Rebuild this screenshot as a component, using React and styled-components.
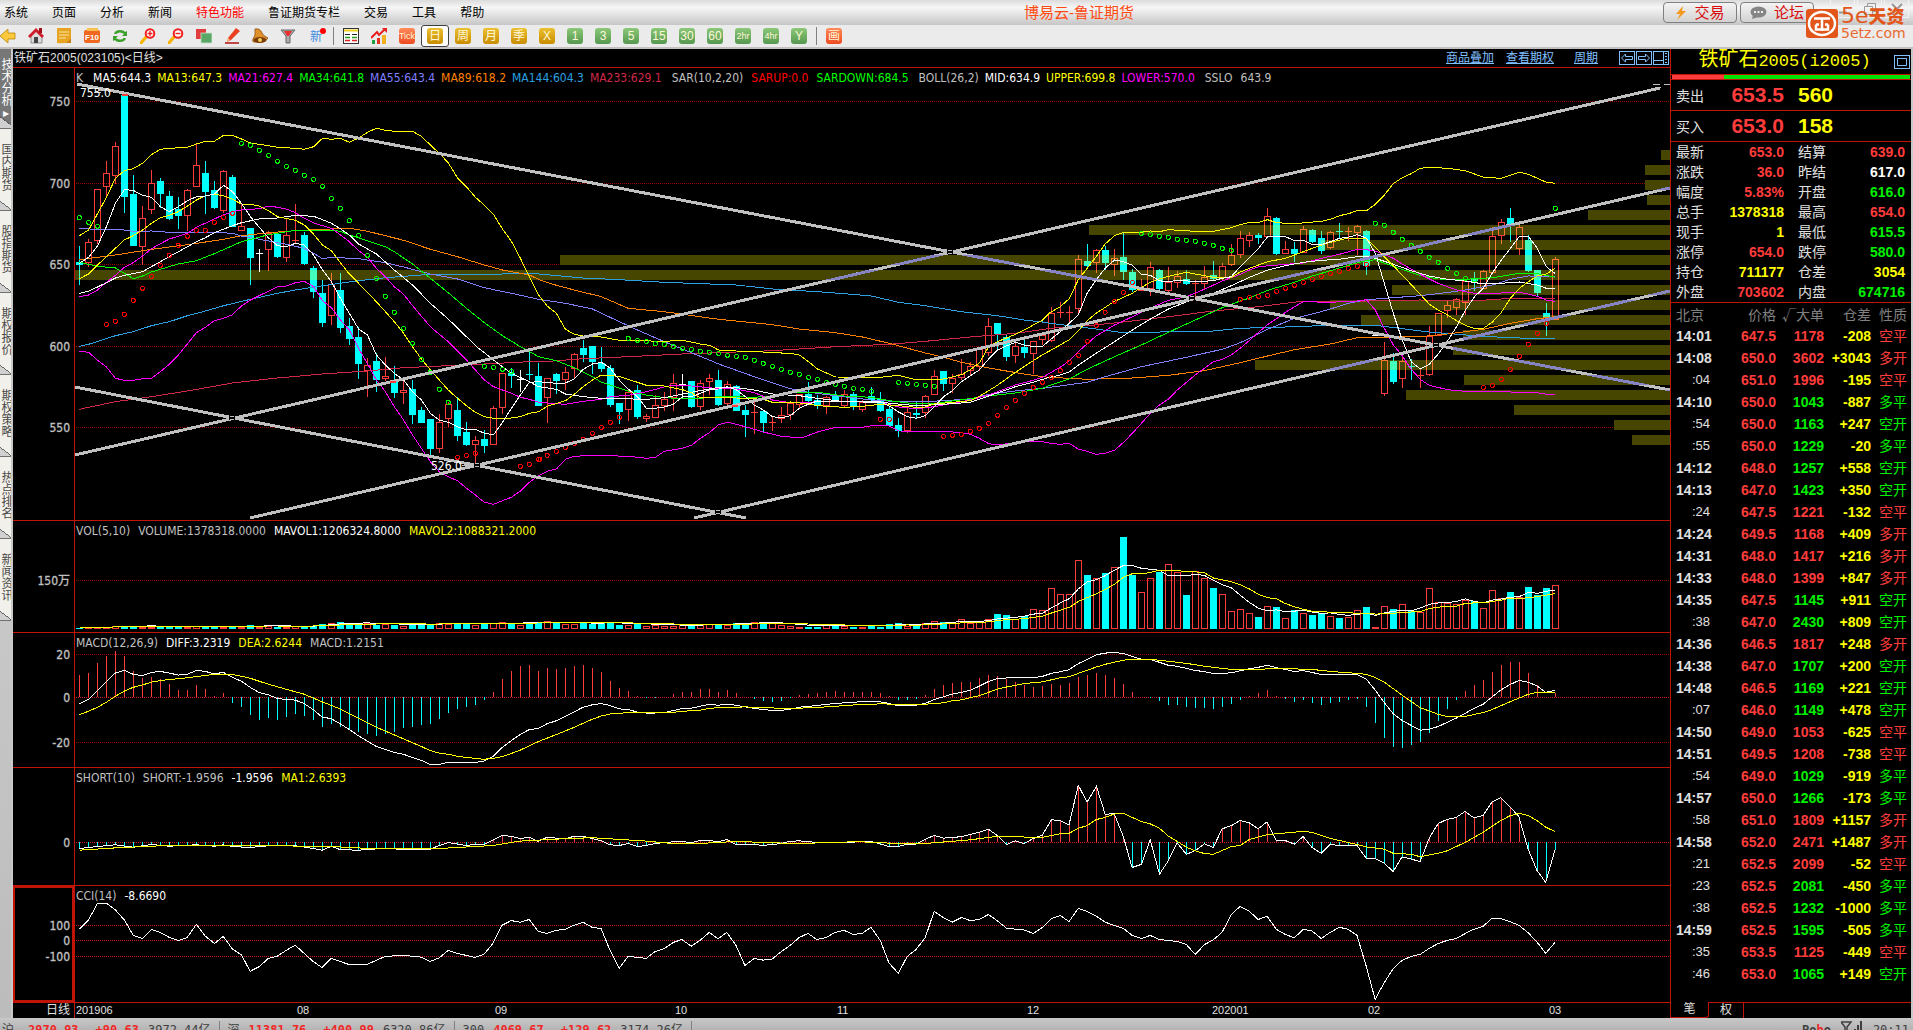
import React from "react";
import styled, { createGlobalStyle, css } from "styled-components";

const SANS = '"Liberation Sans", "Noto Sans CJK SC", sans-serif';
const TAHOMA = '"DejaVu Sans Condensed", "DejaVu Sans", "Noto Sans CJK SC", sans-serif';
const MONO = '"DejaVu Sans Mono", "Noto Sans CJK SC", monospace';

const C = {
  line: "#c01408",
  grid: "#960000",
  red: "#ff3c3c",
  cyan: "#00ffff",
  green: "#00f000",
  yellow: "#ffff00",
  white: "#ffffff",
  label: "#e0e0e0",
  grey: "#c0c0c0",
  magenta: "#ff00ff",
  olive: "#474600",
};

const Global = createGlobalStyle`
  * { box-sizing: border-box; }
  body { margin: 0; background: #000; font-family: ${SANS}; font-size: 12px; }
  button { font-family: inherit; padding: 0; border: 0; background: none; cursor: default; }
  a { text-decoration: none; color: inherit; }
  table { border-collapse: collapse; border-spacing: 0; }
  td, th { padding: 0; }
`;

/* ---------- chart data ---------- */

const PLOT_LEFT = 75;
const PLOT_WIDTH = 1595;
const PLOT_RIGHT = PLOT_LEFT + PLOT_WIDTH;
const barX = (i) => 79.5 + 9 * i;

const frame = (ox, oy, sx, sy) => (text) =>
  text.trim().split(/\s+/).map((p) => {
    const [x, y] = p.split(",").map(Number);
    return [ox + x / sx, oy + y / sy];
  });
const fa = frame(0, 40, 2.8, 3);
const fb = frame(540, 200, 2.8, 3);
const fc = frame(1050, 80, 2.45, 3);
const fl = frame(0, 500, 1.823, 2.958);
const fr = frame(860, 500, 1.823, 2.958);

const join = (...parts) => {
  const out = [];
  parts.forEach((part) => {
    part.forEach((p) => {
      if (!out.length || p[0] > out[out.length - 1][0] + 3) out.push(p);
    });
  });
  return out;
};

const candleSet = (base, text) =>
  text.trim().split(/\s+/).map((row) => {
    const kind = row[0];
    const [h, t, b, l] = row.slice(1).split(",").map((v) => Math.round(base + Number(v) / 3));
    return { kind, h, t, b, l };
  });

const candles = [
  ...candleSet(40, `
  D618,666,675,735 U597,607,668,680 U448,448,602,612 U363,400,442,474 U307,319,407,432
  D158,166,470,518 D405,462,617,617 U498,534,622,675 U390,430,509,521 D414,423,461,503
  D453,468,536,540 D472,507,527,567 U447,451,527,573 U309,376,440,440 D363,399,455,522
  D423,450,503,507 U390,394,512,520 D405,411,560,560 U492,559,574,574 D564,564,654,735
  W628,640,641,695 U573,578,629,692 D581,581,650,654 U537,586,655,665 U492,600,602,610
  D575,585,671,675 D679,684,755,773 D720,759,849,861 U699,732,827,855 D699,750,863,879
  D834,858,897,915 D861,891,971,1017 U954,976,992,1071 D940,963,1020,1055 U951,1009,1017,1024
  D978,1024,1059,1074 U1011,1050,1058,1091 D1020,1047,1124,1152 D1101,1110,1148,1148 D1137,1137,1226,1252
  U1122,1147,1226,1238 U1087,1092,1136,1162 D1071,1110,1187,1202 D1147,1175,1214,1218 U1189,1201,1214,1280
  D1171,1197,1217,1238 U1099,1105,1214,1214 U998,1000,1103,1121 D985,1000,1007,1043 W990,1016,1017,1055
  D936,1002,1003,1020 D969,1008,1097,1097 U1015,1015,1073,1149`),
  ...candleSet(200, `
  D518,522,543,581 U501,516,540,570 U458,462,506,534 D419,444,464,486 D438,438,486,522
  D441,489,507,515 D495,504,615,621 D609,609,636,672 U567,577,629,662 D555,570,651,657
  U641,649,657,666 U585,615,653,653 U576,597,619,633 U522,549,594,633 W522,553,554,594
  D543,543,621,624 U540,549,620,630 U522,534,545,584 D510,540,615,618 U543,552,613,618
  D555,558,633,633 D615,630,645,711 U597,636,638,702 D630,632,669,696 U650,665,667,692
  U621,645,658,669 U609,610,646,660 U582,582,616,628 D546,582,603,612 D585,600,618,627
  U587,592,618,642 D573,588,603,606 U570,582,618,624 D576,582,621,630 U600,605,629,636
  D561,588,600,604 D576,597,633,636 D621,627,678,681 D654,675,693,711 U618,637,692,699
  D606,639,645,657 U586,588,638,655 U510,529,584,584 D513,513,552,573 U522,535,551,579
  U477,522,535,540 U486,498,514,528 U441,446,500,513 U354,379,458,468 D369,369,402,447
  D405,411,471,483 U429,439,469,489 D417,441,459,474 U423,424,461,522 U396,406,421,435
  U321,339,422,426 U306,337,339,354 U318,337,339,366 U165,178,328,342 D132,183,198,204
  U147,151,190,219`),
  ...candleSet(80, `
  D499,510,549,570 U506,535,554,588 D459,532,576,600 D567,576,630,636 U598,625,632,634
  U546,562,628,648 D568,570,627,632 U561,606,633,636 U573,589,609,624 D570,597,612,614
  U600,609,612,657 U558,590,611,627 D543,585,597,600 U549,559,594,599 U492,526,554,558
  U453,475,524,534 U456,466,482,501 D459,465,474,492 U384,409,470,474 D411,414,522,525
  U483,507,521,523 D486,507,522,546 U438,448,518,520 D447,450,486,489 D453,474,513,522
  U453,457,504,507 D429,454,456,474 U441,452,454,483 U435,438,458,526 D450,453,557,585
  W766,766,767,767 U786,841,941,948 D819,843,906,911 U829,843,898,924 D837,857,861,900
  U868,886,889,924 U738,769,884,888 U699,700,767,768 U660,676,694,714 U655,658,685,705
  U603,604,668,705 D576,596,604,633 U570,574,626,628 U441,469,578,580 U417,427,469,492
  D384,414,432,486 U432,441,506,525 D465,480,573,576 D570,570,639,652 D669,699,713,768
  U531,538,719,721`),
];

const overlays = [
  { color: "#d02848", pts: join(
    fa("222,1108 323,1085 424,1070 525,1053 651,1029 777,1014 903,1002 1029,993 1130,983 1255,977 1356,972 1482,965"),
    fb("0,486 121,476 247,470 399,462 525,457 651,452 827,440 978,433 1079,424 1205,411 1331,400 1432,385"),
    fc("0,748 91,737 180,726 290,710 400,693 511,680 577,670 621,663 775,663 907,660 1018,664 1106,657 1238,655")) },
  { color: "#2ba0e0", pts: join(
    fa("222,919 248,913 323,887 373,875 424,857 474,845 525,827 575,813 626,797 701,778 777,760 827,750 903,737 953,730 1004,722 1079,713 1155,707 1205,703 1382,704 1432,700 1508,702"),
    fb("0,226 121,234 222,239 348,247 550,255 651,267 777,275 852,281 928,288 1004,307 1079,317 1180,335 1281,347 1356,360 1407,366"),
    fc("0,730 69,740 180,758 400,753 466,745 577,741 687,736 797,736 863,746 929,756 1018,765 1106,772 1172,775 1238,775")) },
  { color: "#ff8000", pts: join(
    fa("222,659 323,645 424,628 525,614 626,598 676,587 752,578 827,572 903,568 978,565 1029,574 1079,587 1130,601 1205,628 1281,650 1356,675 1407,690 1482,705"),
    fb("0,240 46,256 96,270 172,290 247,325 348,335 500,358 651,374 726,387 827,398 903,411 978,430 1079,459 1130,472 1180,487 1256,504 1356,522 1407,530"),
    fc("0,892 91,898 202,894 290,886 378,872 466,848 533,828 599,809 687,792 753,773 841,771 907,770 974,762 1062,748 1128,730 1194,716 1238,710")) },
  { color: "#7f7fff", pts: join(
    fa("222,566 348,570 373,574 424,573 474,577 600,577 651,580 676,588 752,603 802,613 852,625 878,640 903,656 928,652 1004,656 1079,668 1130,681 1205,702 1281,717 1356,743 1432,760 1508,778"),
    fb("0,296 71,310 147,327 172,340 273,390 348,425 424,458 474,480 500,492 600,530 701,566 726,573 827,587 928,600 1004,605 1079,605 1205,597 1256,583 1331,573 1407,565"),
    fc("0,922 47,914 91,907 135,890 224,860 334,832 422,808 466,788 533,748 599,715 643,702 687,687 731,670 775,659 841,653 907,647 951,641 1018,630 1084,615 1128,598 1172,588 1238,589")) },
  { color: "#00ff00", pts: join(
    fa("222,666 248,673 273,679 323,684 348,700 373,716 399,708 424,696 449,688 499,672 550,662 600,641 676,605 752,584 827,571 928,571 953,574 978,585 1029,602 1079,620 1104,635 1155,672 1205,715 1255,758 1306,805 1356,848 1407,887 1457,920 1508,950"),
    fb("0,460 46,482 96,503 147,530 172,547 197,555 247,573 298,585 348,593 424,597 500,590 550,590 600,592 651,588 701,577 777,577 852,588 928,592 978,602 1054,612 1104,610 1155,603 1256,588 1331,579 1407,565"),
    fc("0,916 47,897 91,868 158,830 224,795 290,757 356,720 422,683 466,663 489,654 533,631 599,607 643,588 687,572 731,556 775,542 797,539 841,559 907,586 951,597 1018,598 1084,593 1150,580 1194,581 1238,592")) },
  { color: "#ff00ff", pts: join(
    fa("222,770 248,765 273,750 298,727 323,706 348,682 373,668 399,648 424,626 449,611 474,597 499,589 525,580 550,562 600,537 626,524 651,515 676,510 726,506 752,498 777,502 802,507 827,518 852,535 878,549 928,565 953,585 978,605 1004,632 1029,652 1054,685 1079,710 1104,740 1130,763 1155,797 1205,860 1255,905 1306,960 1331,990 1356,1020 1382,1040 1432,1060 1457,1072 1482,1078 1508,1087"),
    fb("0,607 71,613 121,604 172,598 197,590 247,586 298,575 348,561 373,555 424,558 500,566 550,567 600,578 651,600 701,608 827,604 953,607 1004,621 1054,626 1104,620 1155,610 1205,600 1256,585 1331,555 1381,541 1407,532"),
    fc("0,879 25,862 47,843 69,815 113,768 158,735 202,710 246,684 290,661 334,650 378,628 422,603 466,583 489,570 511,560 577,553 621,549 665,535 709,523 753,508 775,509 797,513 841,535 863,552 907,583 951,610 996,630 1040,640 1084,641 1128,637 1150,637 1172,642 1194,649 1216,660 1238,664")) },
  { color: "#ffffff", pts: join(
    fa("222,760 248,754 273,741 298,728 323,714 348,706 399,695 424,680 474,650 525,620 550,605 575,593 600,578 651,557 676,548 726,537 777,534 827,526 878,529 903,539 928,550 953,566 978,585 1004,612 1054,642 1104,690 1155,735 1205,790 1255,837 1306,890 1331,917 1382,960 1432,1000 1482,1025 1508,1040"),
    fb("0,558 46,568 71,582 121,590 172,595 298,598 348,593 424,577 500,562 550,563 600,570 651,582 726,587 777,595 852,605 953,607 1054,617 1155,611 1205,607 1256,588 1331,560 1381,547 1407,538"),
    fc("0,892 25,885 47,876 69,856 113,820 158,785 202,750 246,717 290,687 356,655 400,640 444,617 489,592 533,570 577,557 621,547 665,541 709,538 753,530 775,528 797,535 841,553 885,572 929,588 974,598 1018,603 1062,612 1106,610 1150,606 1194,615 1216,625 1238,626")) },
  { color: "#ffff00", pts: join(
    fa("222,716 248,702 273,675 298,650 323,625 348,600 373,587 399,570 424,550 449,533 474,526 499,515 525,498 550,480 575,467 600,463 626,467 651,478 676,492 701,493 726,498 752,512 777,530 827,541 852,555 878,583 903,615 928,632 953,668 978,702 1004,730 1029,758 1054,785 1079,815 1104,845 1130,880 1155,920 1180,957 1205,990 1230,1020 1255,1050 1281,1075 1306,1097 1331,1117 1356,1130 1382,1135 1432,1134 1457,1130 1482,1120 1508,1115"),
    fb("0,632 20,619 71,602 96,583 121,560 147,540 172,525 222,529 247,538 298,556 348,558 399,569 424,578 449,594 500,592 550,594 625,598 651,607 701,606 752,612 777,617 852,622 903,619 953,613 1004,617 1054,622 1079,621 1104,612 1155,607 1205,602 1230,589 1281,556 1331,517 1381,482 1407,464"),
    fc("0,812 25,795 47,779 69,753 91,722 113,700 158,664 180,652 202,640 224,622 246,607 268,597 290,589 334,577 356,582 400,592 444,592 466,576 489,565 533,545 577,535 599,525 643,505 687,487 731,474 775,476 797,501 819,530 863,585 907,643 929,672 951,691 974,705 996,722 1018,736 1040,746 1062,745 1084,726 1106,697 1128,655 1150,625 1172,605 1194,588 1216,582 1238,565")) },
  { color: "#ff00ff", pts: join(
    fa("222,934 248,937 273,961 298,981 323,1015 348,1021 373,1021 399,1016 424,1015 449,995 474,973 499,946 550,878 575,862 600,842 626,835 651,824 676,798 701,780 777,740 802,738 827,728 852,724 878,740 903,782 928,803 953,840 978,870 1004,925 1029,971 1054,1020 1079,1055 1104,1100 1130,1140 1155,1185 1180,1225 1205,1265 1230,1295 1255,1310 1281,1322 1306,1345 1331,1365 1356,1387 1382,1393 1407,1382 1432,1372 1457,1353 1482,1327 1508,1307"),
    fb("0,826 20,814 46,807 71,778 96,769 147,766 247,769 298,775 323,772 348,754 399,745 424,736 449,715 474,698 500,674 525,667 550,673 600,688 625,696 676,709 710,712 740,711 777,696 827,682 903,682 928,677 978,678 1004,693 1130,694 1180,698 1205,703 1230,715 1256,731 1281,735 1330,728 1356,724 1407,725"),
    fc("0,1090 25,1093 47,1090 69,1107 91,1114 113,1123 135,1120 158,1111 180,1087 202,1060 224,1030 246,1000 268,975 290,957 312,930 356,885 378,865 400,845 422,838 444,825 466,805 489,781 511,757 533,734 555,716 577,697 599,680 621,665 687,667 753,663 775,659 797,690 819,745 841,795 863,827 885,868 907,898 929,916 974,929 1018,934 1084,934 1150,937 1194,938 1216,943 1238,943")) },
  { color: "#ffff00", pts: join(
    fa("222,587 248,570 273,521 298,472 323,415 348,392 373,386 399,370 424,344 449,328 474,325 525,322 550,312 575,304 600,304 626,286 651,286 676,297 701,309 726,313 777,322 827,325 852,328 878,320 903,295 928,298 953,295 978,307 1004,294 1029,277 1054,265 1079,271 1104,274 1155,274 1180,289 1205,315 1230,340 1255,368 1281,414 1306,440 1331,472 1356,495 1382,524 1407,567 1432,604 1457,655 1482,710 1508,765"),
    fb("0,290 20,318 46,340 71,388 96,403 121,408 172,411 222,421 348,424 399,421 449,432 474,436 500,450 550,453 625,456 650,458 701,460 726,465 752,485 777,507 827,531 953,532 1004,526 1054,540 1079,538 1130,537 1180,524 1205,509 1230,489 1256,440 1281,425 1331,403 1356,390 1407,360"),
    fc("0,698 25,680 47,656 69,600 91,565 113,530 135,492 158,467 180,457 224,457 246,453 268,455 290,449 356,454 400,454 444,443 466,434 489,427 511,427 533,419 555,428 599,431 665,424 687,418 709,407 731,401 753,392 775,393 797,373 819,345 841,311 863,293 885,281 907,265 929,262 974,265 1018,272 1062,292 1106,295 1128,286 1150,277 1172,283 1216,307 1238,310")) },
  { color: "#ffffff", pts: join(
    fa("222,670 248,652 273,618 298,560 323,490 348,449 373,451 399,466 424,472 449,500 474,515 499,500 525,482 550,470 575,468 600,462 626,436 651,455 676,490 701,530 726,562 752,594 777,617 802,620 827,610 852,615 878,645 903,690 928,725 953,775 978,820 1004,867 1029,885 1054,945 1079,975 1104,1000 1130,1020 1155,1055 1180,1080 1205,1120 1230,1140 1255,1147 1281,1160 1306,1170 1331,1168 1356,1180 1382,1184 1407,1147 1432,1105 1457,1065 1482,1027 1508,1025"),
    fb("0,546 46,550 71,549 96,537 121,508 147,492 172,487 197,505 222,540 247,567 273,590 298,625 323,625 348,621 373,613 399,590 424,590 449,580 474,569 500,567 525,560 550,570 575,590 600,615 625,630 651,650 676,654 701,647 726,625 752,612 777,603 827,605 903,605 953,605 978,618 1004,636 1029,650 1054,655 1079,647 1104,620 1130,590 1155,572 1180,545 1205,527 1230,510 1256,477 1281,450 1306,438 1331,427 1356,435 1381,440 1407,439"),
    fc("0,780 25,755 47,730 69,705 91,640 113,600 135,565 158,540 180,545 202,556 224,583 246,586 268,602 290,606 312,600 356,605 400,602 422,595 444,590 466,560 489,532 511,505 533,470 577,470 599,482 621,481 643,494 665,494 687,485 709,475 731,472 753,464 775,474 797,520 819,610 841,700 863,780 885,845 907,867 929,853 951,822 974,783 996,740 1018,690 1040,650 1062,624 1084,578 1106,540 1128,505 1150,469 1172,469 1194,505 1216,560 1238,581")) },
];

const sarDown = [
  ...fa("222,533 248,547 273,559 676,310 701,316 726,331 752,346 777,364 802,379 827,391 852,406 878,418 903,439 928,475 953,505 978,542 1004,586 1029,646 1054,715 1079,769 1104,817 1130,865 1155,910 1180,958 1205,997 1230,1048 1255,1087 1356,979 1382,982 1407,988 1432,994"),
  ...fb("247,415 273,421 298,424 323,431 348,433 373,439 399,445 424,448 449,454 474,457 500,460 525,466 550,469 575,472 600,481 625,490 651,499 676,508 701,517 726,523 752,532 777,538 802,548 827,553 852,559 878,565 903,568 928,574 1004,547 1029,550 1054,553 1079,556 1104,559"),
  ...fc("224,460 246,463 268,469 290,472 312,478 334,481 356,484 378,490 400,496 422,505 444,511 797,430 819,436 841,457 863,478 885,496 907,514 929,532 951,547 974,565 996,580 1018,595 1040,600 1238,385"),
];
const sarUp = [
  ...fa("298,853 323,844 348,823 373,781 399,745 424,709 449,676 474,646 499,616 525,589 550,571 575,571 600,547 626,532 651,520 1281,1252 1306,1246 1331,1240 1457,1279 1482,1273 1508,1258"),
  ...fb("0,778 20,766 46,754 71,742 96,730 121,718 147,700 172,682 197,667 222,652 953,658 978,658 1130,709 1155,706 1180,703 1205,694 1230,685 1256,670 1281,646 1306,622 1331,601 1356,580 1381,562 1407,547 1432,532 1457,512 1482,487 1508,466 1533,424 1558,376"),
  ...fc("135,697 158,664 180,637 202,607 466,658 489,652 511,649 533,646 555,634 577,625 599,616 621,607 643,598 665,589 687,580 709,574 731,565 753,559 775,553 1062,922 1084,916 1106,898 1128,868 1150,829 1172,793 1194,760 1216,730"),
];

const profile = [
  1661, 1645, 1645, 1647, 1588, 1089, 1321, 560, 75, 1392, 1330, 1361, 1463, 1453, 1255, 1464, 1406, 1514, 1614, 1632,
];

const trendLines = [
  [77, 84, 1670, 390],
  [75, 455, 1660, 88],
  [75, 387, 746, 518],
  [250, 518, 1670, 188],
  [694, 518, 1670, 291],
];

const volumes = [
  1, 1, 2, 1, 3, 3, 3, 2, 2, 2, 2, 2, 2, 3, 3, 2, 2, 2, 2, 4, 2, 3, 2, 2, 3, 2, 3, 5, 6, 7,
  5, 4, 6, 4, 5, 4, 3, 4, 4, 5, 6, 5, 6, 5, 4, 5, 6, 7, 5, 4, 7, 6, 8, 6, 5, 5, 6, 5, 6, 7,
  4, 4, 6, 3, 4, 3, 3, 4, 3, 4, 5, 4, 4, 6, 6, 7, 5, 6, 4, 3, 2, 2, 2, 4, 4, 3, 2,
  ...[
    376, 370, 374, 367, 364, 372, 373, 364, 356, 360, 364, 350, 364, 360, 350, 337, 341, 350, 343, 321,
    326, 261, 276, 276, 176, 222, 229, 216, 199, 109, 221, 273, 229, 213, 190, 212, 281, 208, 229, 260,
    276, 329, 323, 335, 346, 312, 317, 347, 325, 335, 340, 333, 342, 349, 346, 326, 317, 376, 312, 322,
    306, 328, 330, 261, 300, 303, 306, 296, 299, 320, 267, 288, 272, 285, 257, 281, 260, 250,
  ].map((v) => Math.round((381 - v) / 2.958)),
];

const average = (list, n) =>
  list.map((_, i) => {
    const part = list.slice(Math.max(0, i - n + 1), i + 1);
    return part.reduce((a, b) => a + b, 0) / part.length;
  });

const sample = (pts) =>
  candles.map((_, i) => {
    const x = barX(i);
    const k = pts.findIndex((p) => p[0] >= x);
    if (k <= 0) return k === 0 ? pts[0][1] : pts[pts.length - 1][1];
    const [x0, y0] = pts[k - 1];
    const [x1, y1] = pts[k];
    return y0 + ((y1 - y0) * (x - x0)) / (x1 - x0);
  });

const diff = join(
  fl("145,603 161,590 178,563 194,537 210,512 227,504 243,516 260,519 276,510 292,507 309,512 325,518 341,516 358,504 374,507 391,514 407,510 424,525 440,536 456,554 473,570 489,576 505,587 522,590 538,592 554,602 571,620 587,642 604,647 620,662 636,678 653,697 669,713 686,729 702,738 719,747 735,752 751,761 768,770 784,782 801,782 817,776 866,776 882,773 899,758 915,733 932,712 948,694 965,679 981,676 997,662 1014,653 1030,641 1046,627 1063,613 1079,606 1096,602 1112,608 1129,618 1145,620 1162,627 1178,630 1194,630 1211,629 1243,617 1260,616 1293,604 1309,607 1325,604 1342,607 1358,612 1391,620 1407,622 1424,622 1440,619 1457,613 1489,608 1522,602"),
  fr("0,597 37,597 53,602 70,609 102,607 119,602 135,590 152,582 168,574 185,569 201,563 217,551 234,537 250,528 283,525 316,525 332,522 349,513 365,508 381,502 398,484 414,472 431,458 447,453 463,451 480,454 496,463 513,471 529,472 546,480 562,489 578,492 611,504 628,508 644,513 660,513 677,511 710,499 726,495 742,489 759,496 792,507 808,505 841,516 906,516 923,530 939,562 956,600 972,632 988,652 1005,667 1021,681 1038,678 1054,670 1087,645 1119,617 1136,604 1152,583 1168,562 1185,546 1201,534 1218,539 1234,550 1250,569 1267,563"));
const dea = join(
  fl("145,635 161,625 178,613 194,598 210,581 227,565 243,554 260,547 276,539 292,534 341,526 374,519 391,516 424,516 456,527 489,545 522,560 554,574 587,597 620,618 653,645 686,672 735,706 768,729 784,741 801,749 817,752 833,758 882,767 899,764 915,759 932,750 948,740 981,715 1014,694 1046,673 1079,649 1096,639 1112,633 1145,629 1211,629 1227,628 1243,625 1276,622 1293,616 1358,612 1407,615 1440,618 1457,616 1506,612"),
  fr("0,605 37,603 70,604 119,604 152,600 168,594 185,591 217,579 250,560 267,553 299,543 332,538 365,526 381,523 398,513 431,494 447,486 480,474 496,471 529,471 578,480 611,487 628,492 677,501 726,501 759,498 824,501 857,507 906,513 923,516 939,525 956,539 988,577 1021,614 1054,634 1070,640 1103,640 1136,629 1152,620 1185,597 1218,575 1234,569 1267,569"));
const short = join(
  fl("145,1031 178,1025 210,1020 243,1027 276,1019 309,1024 358,1020 391,1024 407,1020 424,1025 456,1028 489,1023 538,1023 554,1026 571,1031 587,1036 604,1024 620,1034 653,1036 686,1032 784,1033 801,1022 817,1013 849,1022 866,1019 882,1020 899,1006 915,992 932,995 948,1001 965,998 981,1010 997,998 1030,1002 1046,995 1063,995 1079,1001 1096,1008 1112,1020 1129,1022 1145,1016 1162,1025 1178,1022 1194,1016 1227,1011 1243,1010 1260,1014 1276,1007 1293,1007 1309,1011 1325,1004 1342,1019 1375,1019 1391,1022 1424,1016 1440,1010 1457,1008 1489,1013 1555,1012"),
  fr("0,1011 20,1010 53,1025 70,1025 86,1018 102,1018 119,1004 135,992 152,1000 185,996 217,983 234,974 250,992 267,1019 283,1008 299,1017 316,1001 332,992 349,946 365,948 381,961 398,844 414,894 431,847 447,930 463,927 480,995 496,1087 513,1078 529,1005 546,1107 562,1067 578,1014 595,1048 611,1037 628,1017 644,1028 660,973 677,963 693,948 710,955 726,973 742,952 759,1007 775,1007 792,1018 808,995 824,1028 841,1045 857,1019 874,1022 906,1022 923,1060 939,1060 956,1075 972,1099 988,1056 1005,1062 1021,1070 1038,999 1054,957 1070,945 1087,939 1103,921 1119,940 1136,933 1152,894 1168,880 1185,908 1201,936 1218,1033 1234,1095 1250,1131 1267,1035"));
const shortMa = join(
  fl("145,1036 210,1029 292,1023 374,1022 505,1023 604,1025 686,1032 801,1031 899,1022 948,1009 1030,1002 1079,999 1129,1004 1178,1009 1227,1016 1276,1016 1342,1010 1407,1014 1457,1016 1555,1011"),
  fr("0,1011 70,1016 119,1016 201,1005 250,995 332,998 365,987 381,986 398,971 414,963 431,945 447,939 463,929 480,927 496,939 513,951 529,958 546,971 562,994 578,1010 595,1027 611,1038 628,1046 644,1048 660,1037 677,1025 693,1022 710,1004 742,990 808,980 824,983 857,1001 906,1019 923,1026 956,1033 972,1045 1005,1048 1021,1055 1054,1045 1070,1038 1103,1013 1136,983 1168,948 1185,934 1201,927 1218,933 1234,948 1250,968 1267,981"));
const cci = join(
  fl("145,1269 161,1243 178,1193 194,1193 210,1212 227,1243 243,1288 260,1297 276,1270 292,1279 309,1294 325,1303 341,1294 358,1255 374,1290 391,1312 407,1291 424,1329 440,1345 456,1394 473,1380 489,1356 505,1350 522,1332 538,1317 571,1365 587,1383 604,1356 636,1374 669,1374 702,1350 735,1347 768,1352 784,1365 801,1354 817,1332 833,1341 866,1353 882,1344 899,1311 915,1258 932,1244 948,1249 965,1241 981,1276 997,1282 1014,1273 1030,1270 1046,1258 1063,1249 1079,1264 1096,1268 1112,1332 1129,1385 1145,1350 1178,1356 1194,1336 1211,1327 1227,1309 1243,1300 1260,1320 1276,1303 1293,1279 1309,1298 1325,1279 1342,1318 1358,1377 1375,1356 1391,1361 1407,1359 1424,1336 1440,1318 1457,1294 1473,1282 1489,1300 1506,1294 1522,1279 1539,1273 1555,1285"),
  fr("4,1282 20,1264 37,1303 53,1370 70,1400 86,1350 102,1330 119,1294 135,1217 152,1235 168,1249 185,1235 201,1244 217,1241 234,1226 250,1244 267,1267 299,1272 316,1282 332,1265 349,1238 365,1229 381,1247 398,1208 414,1217 431,1231 447,1249 463,1258 480,1267 496,1288 513,1297 529,1288 546,1300 578,1306 595,1315 611,1344 628,1315 644,1301 660,1279 677,1226 693,1202 710,1217 726,1241 742,1231 759,1270 775,1285 792,1295 808,1270 824,1275 841,1297 857,1279 874,1264 890,1270 906,1288 923,1380 939,1477 956,1427 972,1386 988,1362 1005,1350 1021,1344 1038,1326 1054,1312 1070,1303 1087,1297 1103,1283 1119,1270 1136,1261 1152,1238 1168,1238 1185,1247 1201,1258 1218,1280 1234,1307 1250,1341 1267,1309"));

/* ---------- chart drawing ---------- */

const Line = ({ pts, color, w = 1 }) => (
  <polyline fill="none" stroke={color} strokeWidth={w} points={pts.map((p) => `${p[0].toFixed(1)},${p[1].toFixed(1)}`).join(" ")} />
);

const Candles = ({ up, down, flat }) =>
  candles.map((c, i) => {
    const x = barX(i);
    const color = c.kind === "U" ? up : c.kind === "D" ? down : flat;
    const thin = c.b - c.t < 2;
    return (
      <g key={i} stroke={color} fill="none">
        {c.h < c.t && <path d={`M${x} ${c.h}V${c.t}`} />}
        {c.l > c.b && <path d={`M${x} ${c.b}V${c.l}`} />}
        {thin ? (
          <path d={`M${x - 3.5} ${c.t + 0.5}H${x + 3.5}`} />
        ) : (
          <rect x={x - 3} y={c.t + 0.5} width="6" height={c.b - c.t - 1} fill={c.kind === "D" ? down : "none"} />
        )}
      </g>
    );
  });

const Trends = ({ color }) =>
  trendLines.map(([x1, y1, x2, y2]) => (
    <line key={`${x1}-${y1}`} x1={x1} y1={y1} x2={x2} y2={y2} stroke={color} strokeWidth="3" />
  ));

const crossings = [[232, 418], [477, 465], [718, 512], [950, 252], [1192, 298], [1436, 345]];

const Dots = ({ pts, color }) =>
  pts.map(([x, y], i) => <ellipse key={i} cx={x} cy={y} rx="2" ry="2" fill="none" stroke={color} />);

const PricePlot = () => (
  <>
    <clipPath id="profile">
      {profile.map((x, i) => (
        <rect key={i} x={x} y={150 + i * 15} width={PLOT_RIGHT - x} height="10" />
      ))}
    </clipPath>
    {profile.map((x, i) => (
      <rect key={i} x={x} y={150 + i * 15} width={PLOT_RIGHT - x} height="10" fill={C.olive} />
    ))}
    <Candles up={C.red} down={C.cyan} flat={C.white} />
    <g clipPath="url(#profile)">
      <Candles up="#ff7830" down="#44ffbb" flat={C.white} />
    </g>
    {overlays.map((o, i) => (
      <Line key={i} {...o} />
    ))}
    <Dots pts={sarDown} color="#00ff00" />
    <Dots pts={sarUp} color="#ff0000" />
    <Trends color={C.grey} />
    <g clipPath="url(#profile)">
      <Trends color="#8684c2" />
    </g>
    {crossings.map(([x, y]) => (
      <g key={x}>
        <rect x={x - 3} y={y - 2} width="6" height="4" fill="#000" />
        <path d={`M${x - 2} ${y - 1.5}H${x + 2}M${x - 2} ${y + 1.5}H${x + 2}`} stroke={C.grey} />
      </g>
    ))}
    <path d="M1653 84.5H1660M1664 84.5H1670M1656 87.5H1661M94 92.5H101M98 90.5H104M462 465.5H472" stroke={C.grey} />
    <path d="M122 94.5H128M390 381.5H396M732 405.5H738" stroke={C.red} strokeWidth="2" />
  </>
);

const VolumePlot = () => (
  <>
    {volumes.map((h, i) => {
      const x = barX(i);
      const down = candles[i].kind === "D";
      return down || h < 2 ? (
        <rect key={i} x={x - 3.5} y={629 - h} width="7" height={h} fill={down ? C.cyan : C.red} />
      ) : (
        <rect key={i} x={x - 3} y={629.5 - h} width="6" height={h - 1} fill="none" stroke={C.red} />
      );
    })}
    <Line color={C.white} pts={average(volumes, 5).map((v, i) => [barX(i), 628.5 - v])} />
    <Line color={C.yellow} pts={average(volumes, 10).map((v, i) => [barX(i), 628.5 - v])} />
  </>
);

const Sticks = ({ values, zero }) =>
  values.map((v, i) => (
    <path key={i} d={`M${barX(i)} ${zero}V${Math.round(zero - v)}`} stroke={v > 0 ? C.red : C.cyan} />
  ));

const MacdPlot = () => {
  const a = sample(diff);
  const b = sample(dea);
  return (
    <>
      <Sticks zero={697} values={a.map((v, i) => 2 * (b[i] - v))} />
      <Line pts={diff} color={C.white} />
      <Line pts={dea} color={C.yellow} />
    </>
  );
};

const ShortPlot = () => (
  <>
    <Sticks zero={842} values={sample(short).map((v) => 842 - v)} />
    <Line pts={short} color={C.white} />
    <Line pts={shortMa} color={C.yellow} />
  </>
);

const CciPlot = () => <Line pts={cci} color={C.white} />;

const panes = [
  {
    id: "k", top: 68, height: 452, Plot: PricePlot, gap: 6,
    ticks: [[101, "750"], [183, "700"], [264, "650"], [346, "600"], [427, "550"]],
    notes: [[80, 93, "755.0"], [431, 466, "526.0"]],
    legend: [
      ["K", C.grey, 4], ["MA5:644.3", C.white], ["MA13:647.3", C.yellow], ["MA21:627.4", C.magenta],
      ["MA34:641.8", "#00ff00"], ["MA55:643.4", "#7f7fff"], ["MA89:618.2", "#ff8000"], ["MA144:604.3", "#2ba0e0"],
      ["MA233:629.1", "#d02848", 4], ["SAR(10,2,20)", C.grey, 2], ["SARUP:0.0", "#ff0000", 2], ["SARDOWN:684.5", "#00ff00", 4],
      ["BOLL(26,2)", C.grey], ["MID:634.9", C.white], ["UPPER:699.8", C.yellow], ["LOWER:570.0", C.magenta, 4],
      ["SSLO", C.grey, 2], ["643.9", C.grey],
    ],
  },
  {
    id: "vol", top: 521, height: 111, Plot: VolumePlot, ticks: [[580, "150万"]],
    legend: [["VOL(5,10)", C.grey], ["VOLUME:1378318.0000", C.grey], ["MAVOL1:1206324.8000", C.white], ["MAVOL2:1088321.2000", C.yellow]],
  },
  {
    id: "macd", top: 633, height: 134, Plot: MacdPlot, ticks: [[654, "20"], [697, "0", true], [742, "-20"]],
    legend: [["MACD(12,26,9)", C.grey], ["DIFF:3.2319", C.white], ["DEA:2.6244", C.yellow], ["MACD:1.2151", C.grey]],
  },
  {
    id: "short", top: 768, height: 117, Plot: ShortPlot, ticks: [[842, "0", true]],
    legend: [["SHORT(10)", C.grey], ["SHORT:-1.9596", C.grey], ["-1.9596", C.white], ["MA1:2.6393", C.yellow]],
  },
  {
    id: "cci", top: 886, height: 116, Plot: CciPlot, selected: true,
    ticks: [[925, "100", true], [940, "0", true], [956, "-100", true]],
    legend: [["CCI(14)", C.grey], ["-8.6690", C.white]],
  },
];

const dates = [[76, "201906"], [297, "08"], [495, "09"], [675, "10"], [837, "11"], [1027, "12"], [1212, "202001"], [1368, "02"], [1549, "03"]];

/* ---------- shell ---------- */

const Shell = styled.div`
  display: flex;
  flex-direction: column;
  height: 100vh;
  overflow: hidden;
  background: #c8c8c8;
`;

const MenuBar = styled.header`
  position: relative;
  display: flex;
  align-items: center;
  flex: 0 0 25px;
  padding: 0 99px 0 4px;
  background: linear-gradient(#dcdcdc, #f6f6f6 30%, #dedede 65%, #c6c6c6);
`;
const Menu = styled.nav`
  display: flex;
  gap: 24px;
  flex: 3 1 0;
`;
const MenuItem = styled.button`
  font-size: 12px;
  line-height: 22px;
  color: ${(p) => (p.$hot ? "#ff0000" : "#000")};
`;
const AppTitle = styled.h1`
  margin: 0;
  font-size: 15px;
  font-weight: 400;
  line-height: 20px;
  color: #ff4a10;
`;
const MenuEnd = styled.div`
  display: flex;
  justify-content: flex-end;
  gap: 3px;
  flex: 2 1 0;
`;
const PillButton = styled.button`
  display: flex;
  align-items: center;
  justify-content: center;
  gap: 7px;
  width: 74px;
  height: 21px;
  border: 1px solid #808080;
  border-radius: 4px;
  background: linear-gradient(#f4f4f4, #d2d2d2);
  color: #d80c0c;
  font-size: 15px;
  line-height: 18px;
`;
const Watermark = styled.div`
  position: absolute;
  top: 2px;
  right: 4px;
  z-index: 2;
  display: flex;
  align-items: center;
  gap: 3px;
  height: 42px;
  color: #e86a30;
`;
const MarkText = styled.div`
  display: flex;
  flex-direction: column;
  width: 68px;
  white-space: nowrap;
  font-family: "DejaVu Sans", "Noto Sans CJK SC", sans-serif;
`;
const MarkTop = styled.span`
  font-size: 17px;
  line-height: 17px;
  color: #e2561a;
  b { font-size: 18px; font-weight: 900; }
  i { font-size: 22px; font-style: normal; font-weight: 400; }
`;
const MarkSub = styled.span`
  font-size: 14px;
  line-height: 14px;
`;
const WindowButtons = styled.div`
  position: absolute;
  top: 0;
  right: 4px;
  display: flex;
  gap: 2px;
`;
const WindowButton = styled.button`
  width: 25px;
  height: 18px;
  border: 1px solid #f2f2f2;
  border-top: 0;
  color: #999;
  line-height: 0;
`;

const ToolBar = styled.div`
  display: flex;
  align-items: center;
  flex: 0 0 24px;
  border-bottom: 2px solid #c4c0c0;
  background: #ebebeb;
`;
const ToolGroup = styled.div`
  display: flex;
  align-items: center;
  gap: 12px;
`;
const Divider = styled.i`
  width: 1px;
  height: 18px;
  margin: 0 9px;
  background: #808080;
`;
const ToolButton = styled.button`
  display: block;
  width: 16px;
  height: 16px;
  line-height: 0;
`;
const badgeTone = {
  gold: "linear-gradient(#ecc030, #c88c00)",
  green: "linear-gradient(#8cc878, #569850)",
  red: "linear-gradient(#ff8a58, #ee4a20)",
};
const Badge = styled.button`
  display: flex;
  justify-content: center;
  width: 16px;
  height: 16px;
  border-radius: 3px;
  background: ${(p) => badgeTone[p.$tone]};
  color: #fff8d8;
  font-size: ${(p) => (p.$small ? 9 : 12)}px;
  line-height: 16px;
  white-space: nowrap;
`;
const SelectedBox = styled.span`
  padding: 2px 5px;
  margin: 0 -6px;
  border: 1px solid #404040;
  border-radius: 3px;
  background: #fff;
`;
const NewBadge = styled.button`
  position: relative;
  width: 16px;
  height: 16px;
  color: #3c8ce0;
  font-size: 12px;
  line-height: 18px;
  &::after {
    content: "";
    position: absolute;
    top: 0;
    right: -2px;
    width: 6px;
    height: 6px;
    border-radius: 50%;
    background: #ff0000;
  }
`;

const Body = styled.div`
  display: flex;
  flex: 1;
  min-height: 0;
  padding-right: 2px;
`;
const SideTabs = styled.nav`
  flex: 0 0 11px;
  overflow: hidden;
  background: linear-gradient(#d8d8d8, #bcbcbc);
`;
const SideTab = styled.a`
  display: block;
  height: ${(p) => (p.$active ? 80 : 82)}px;
  padding: ${(p) => (p.$active ? 9 : 14)}px 2px 0 0;
  writing-mode: vertical-rl;
  font-size: 12px;
  line-height: 12px;
  color: ${(p) => (p.$active ? "#fff" : "#484848")};
  background: ${(p) =>
    p.$active
      ? "linear-gradient(37deg, #d0d0d0 12%, #555 12%, #777 14%)"
      : "linear-gradient(37deg, #d0d0d0 9%, #666 9%, #666 10%, #f1f0ea 10%)"};
  border-bottom: 1px solid #707070;
`;
const ChartArea = styled.main`
  display: flex;
  flex-direction: column;
  flex: 1;
  min-width: 0;
  border-left: 2px solid #c8c8c8;
  background: #000;
`;
const ChartHeader = styled.div`
  display: flex;
  align-items: center;
  flex: 0 0 19px;
  padding: 0 1px;
  border-bottom: 1px solid ${C.line};
  color: ${C.label};
`;
const ChartTitle = styled.h2`
  flex: 1;
  margin: 0;
  font-size: 12px;
  font-weight: 400;
  line-height: 18px;
`;
const ChartLinks = styled.div`
  display: flex;
  align-items: center;
  gap: 12px;
  padding-right: 21px;
  color: #80c0ff;
  a { text-decoration: underline; line-height: 16px; }
`;
const PeriodLink = styled.a`
  margin-left: 8px;
`;
const NavIcons = styled.div`
  display: flex;
  gap: 1px;
  color: #80c0ff;
`;
const IconButton = styled.button`
  width: 16px;
  height: 14px;
  border: 1px solid currentColor;
  color: #80c0ff;
  line-height: 0;
`;
const Pane = styled.section`
  display: flex;
  flex: ${(p) => p.$grow} 1 0;
  min-height: 0;
  border-bottom: 1px solid ${C.line};
`;
const Axis = styled.div`
  position: relative;
  flex: 0 0 62px;
  border-right: 1px solid ${C.line};
  ${(p) =>
    p.$selected &&
    css`
      box-shadow: inset 0 0 0 2px ${C.line};
    `}
`;
const AxisTick = styled.span`
  position: absolute;
  right: 4px;
  font-family: ${TAHOMA};
  font-size: 12px;
  line-height: 16px;
  margin-top: -7px;
  color: ${C.grey};
  -webkit-text-stroke: 0.3px ${C.grey};
`;
const Plot = styled.div`
  position: relative;
  flex: 1;
  min-width: 0;
`;
const PlotSvg = styled.svg`
  position: absolute;
  inset: 0;
  width: 100%;
  height: 100%;
`;
const Legend = styled.div`
  position: relative;
  display: flex;
  gap: ${(p) => p.$gap}px;
  padding-left: 1px;
  font-family: ${TAHOMA};
  font-size: 12px;
  line-height: 20px;
  white-space: nowrap;
`;
const LegendItem = styled.span`
  color: ${(p) => p.$color};
  margin-right: ${(p) => p.$after}px;
`;
const Note = styled.span`
  position: absolute;
  margin-top: -8px;
  font-family: ${TAHOMA};
  font-size: 12px;
  line-height: 16px;
  color: ${C.white};
`;
const DateAxis = styled.div`
  display: flex;
  flex: 0 0 15px;
  font-size: 11px;
  line-height: 15px;
  color: ${C.label};
`;
const PeriodName = styled.div`
  flex: 0 0 62px;
  padding-right: 4px;
  border-right: 1px solid ${C.line};
  text-align: right;
  font-size: 12px;
`;
const DateTrack = styled.div`
  position: relative;
  flex: 1;
`;
const DateMark = styled.span`
  position: absolute;
`;

/* ---------- quote panel ---------- */

const Quote = styled.aside`
  display: flex;
  flex-direction: column;
  flex: 0 0 241px;
  border-left: 1px solid ${C.line};
  background: #000;
  color: ${C.label};
`;
const QuoteHead = styled.div`
  display: flex;
  align-items: center;
  flex: 0 0 25px;
  padding-right: 1px;
  border-bottom: 1px solid ${C.line};
`;
const QuoteTitle = styled.h2`
  flex: 1;
  margin: 0;
  padding-left: 4px;
  text-align: center;
  font-family: "Liberation Mono", "Noto Sans CJK SC", monospace;
  font-size: 20px;
  font-weight: 400;
  line-height: 24px;
  color: ${C.yellow};
  white-space: nowrap;
  span { font-size: 17px; }
`;
const Ratio = styled.div`
  display: flex;
  flex: 0 0 5px;
  padding: 0 1px;
  border-bottom: 1px solid ${C.line};
`;
const RatioPart = styled.i`
  flex: ${(p) => p.$grow};
  background: ${(p) => p.$color};
`;
const DepthRow = styled.div`
  display: flex;
  align-items: center;
  flex: 0 0 31px;
  padding-left: 5px;
  border-bottom: 1px solid ${C.line};
  font-size: 14px;
`;
const DepthLabel = styled.span`
  width: 28px;
`;
const Big = styled.b`
  width: ${(p) => p.$w}px;
  font-size: 21px;
  line-height: 30px;
  color: ${(p) => p.$color};
  text-align: right;
`;
const Stats = styled.table`
  table-layout: fixed;
  width: 240px;
  border-bottom: 1px solid ${C.line};
  tr { height: 20px; }
  th { font-size: 14px; font-weight: 400; line-height: 18px; text-align: left; padding-left: 5px; }
  td + th { padding-left: 14px; }
`;
const Num = styled.td`
  padding-right: ${(p) => p.$pad || 0}px;
  font-size: 14px;
  font-weight: 700;
  line-height: 18px;
  text-align: right;
  color: ${(p) => p.$color};
`;
const Ticks = styled.table`
  table-layout: fixed;
  width: 240px;
  tr { height: 22px; }
  th {
    font-family: "Noto Sans CJK SC", sans-serif;
    font-size: 14px;
    font-weight: 400;
    line-height: 20px;
    text-align: right;
    color: #808080;
    white-space: nowrap;
  }
  th:first-child { text-align: left; padding-left: 5px; }
  th:last-child { padding-right: 4px; }
`;
const Time = styled.td`
  padding-left: ${(p) => (p.$minor ? 21 : 5)}px;
  font-size: ${(p) => (p.$minor ? 13 : 14)}px;
  font-weight: ${(p) => (p.$minor ? 400 : 700)};
  line-height: 20px;
  color: ${C.label};
`;
const Kind = styled.td`
  padding-right: 4px;
  font-size: 14px;
  line-height: 20px;
  text-align: right;
  color: ${(p) => p.$color};
`;
const QuoteTabs = styled.div`
  display: flex;
  height: 16px;
  margin-top: auto;
`;
const QuoteTab = styled.button`
  width: ${(p) => (p.$active ? 38 : 35)}px;
  height: 16px;
  color: ${C.label};
  font-size: 12px;
  line-height: 15px;
  border-right: 1px solid ${C.line};
  ${(p) =>
    p.$active
      ? css`
          border-bottom: 1px solid ${C.line};
          border-bottom-right-radius: 3px;
        `
      : css`
          border-top: 1px solid ${C.line};
        `}
`;
const TabRest = styled.i`
  flex: 1;
  border-top: 1px solid ${C.line};
`;

/* ---------- status bar ---------- */

const StatusBar = styled.footer`
  display: flex;
  flex: 0 0 12px;
  gap: 8px;
  padding: 3px 4px 0 2px;
  overflow: hidden;
  background: linear-gradient(#c8c8c8, #b4b4b4);
  font-family: ${MONO};
  font-size: 12px;
  line-height: 18px;
  color: #404040;
  white-space: nowrap;
`;
const IndexQuote = styled.span`
  display: flex;
  gap: 9px;
  padding-right: 8px;
  border-right: 1px solid #808080;
  b { color: #f02828; }
`;
const IndexValue = styled.b`
  padding-left: ${(p) => (p.$lead ? 5 : 8)}px;
`;
const StatusEnd = styled.span`
  display: flex;
  gap: 10px;
  margin-left: auto;
  em { color: #f02828; font-style: normal; }
`;

/* ---------- content ---------- */

const menuItems = ["系统", "页面", "分析", "新闻", "特色功能", "鲁证期货专栏", "交易", "工具", "帮助"];
const sideTabs = ["技术分析", "国内期货", "股指期货", "期权报价", "期权策略", "热点排名", "新闻资讯"];

const R = C.red, G = C.green, Y = C.yellow, W = C.white;
const stats = [
  ["最新", "653.0", R, "结算", "639.0", R],
  ["涨跌", "36.0", R, "昨结", "617.0", W],
  ["幅度", "5.83%", R, "开盘", "616.0", G],
  ["总手", "1378318", Y, "最高", "654.0", R],
  ["现手", "1", Y, "最低", "615.5", G],
  ["涨停", "654.0", R, "跌停", "580.0", G],
  ["持仓", "711177", Y, "仓差", "3054", Y],
  ["外盘", "703602", R, "内盘", "674716", G],
];
const ticks = `
14:01 647.5 1178 -208 空平 R|14:08 650.0 3602 +3043 多开 R|:04 651.0 1996 -195 空平 R|14:10 650.0 1043 -887 多平 G
:54 650.0 1163 +247 空开 G|:55 650.0 1229 -20 多平 G|14:12 648.0 1257 +558 空开 G|14:13 647.0 1423 +350 空开 G
:24 647.5 1221 -132 空平 R|14:24 649.5 1168 +409 多开 R|14:31 648.0 1417 +216 多开 R|14:33 648.0 1399 +847 多开 R
14:35 647.5 1145 +911 空开 G|:38 647.0 2430 +809 空开 G|14:36 646.5 1817 +248 多开 R|14:38 647.0 1707 +200 空开 G
14:48 646.5 1169 +221 空开 G|:07 646.0 1149 +478 空开 G|14:50 649.0 1053 -625 空平 R|14:51 649.5 1208 -738 空平 R
:54 649.0 1029 -919 多平 G|14:57 650.0 1266 -173 多平 G|:58 651.0 1809 +1157 多开 R|14:58 652.0 2471 +1487 多开 R
:21 652.5 2099 -52 空平 R|:23 652.5 2081 -450 多平 G|:38 652.5 1232 -1000 多平 G|14:59 652.5 1595 -505 多平 G
:35 653.5 1125 -449 空平 R|:46 653.0 1065 +149 空开 G`
  .trim().split(/[|\n]/).map((r) => r.split(" "));

const I = ({ children }) => (
  <svg width="16" height="16" viewBox="0 0 16 16">{children}</svg>
);
const Lens = ({ plus }) => (
  <I>
    <path d="M1 15L6 9" stroke="#f5b400" strokeWidth="3" strokeLinecap="round" />
    <circle cx="10" cy="5.5" r="4.3" fill="#fff" stroke="#f02020" strokeWidth="2" />
    <path d={plus ? "M7.5 5.5h5M10 3v5" : "M7.5 5.5h5"} stroke="#f02020" strokeWidth="1.4" />
  </I>
);
const tools = [
  ["后退", <I><path d="M0 8L8 1V5H15V11H8V15Z" fill="#fcc83c" stroke="#b8860b" strokeWidth=".8" /></I>],
  ["首页", <I><path d="M3 8V15H14V8L8 3Z" fill="#ddd" stroke="#777" strokeWidth=".8" /><path d="M0 8L8 0L16 8L14 10L8 4L2 10Z" fill="#d01c28" /><rect x="11" y="0" width="3" height="5" fill="#a01018" /><rect x="6" y="9" width="4" height="6" fill="#444" /></I>],
  ["公告", <I><path d="M1 0H15V13Q11 16 1 15Z" fill="#e6a422" /><path d="M3 4H13M3 7H13M3 10H10" stroke="#fbe3a0" /><path d="M15 10Q12 15 8 15L15 15Z" fill="#c77f10" /></I>],
  ["F10", <I><rect x="0" y="2" width="16" height="13" rx="2" fill="#f06820" /><rect x="3" y="0" width="11" height="3" fill="#f8c050" /><text x="8" y="12" fontSize="8" fontWeight="bold" fill="#fff" textAnchor="middle" fontFamily="Liberation Sans, sans-serif">F10</text></I>],
  ["刷新", <I><path d="M2 6Q3 2 8 2Q12 2 13 4L15 3V8H10L12 6Q10 4.500 8 4.500Q5 4.500 4.500 6Z" fill="#3ca02c" /><path d="M14 10Q13 14 8 14Q4 14 3 12L1 13V8H6L4 10Q6 11.500 8 11.500Q11 11.500 11.500 10Z" fill="#3ca02c" /></I>],
  ["放大", <Lens plus />],
  ["缩小", <Lens />],
  ["叠加", <I><rect x="0" y="1" width="10" height="10" fill="#e23c3c" /><rect x="5" y="5" width="11" height="10" fill="#5aa868" stroke="#c8e0c8" strokeWidth=".8" /></I>],
  ["画线", <I><path d="M12 0L16 3L7 12L3 14L4 10Z" fill="#e84020" /><path d="M3 14L4 10L6 12Z" fill="#f8c880" /><path d="M1 15H15" stroke="#b01010" strokeWidth="1.500" /></I>],
  ["预警", <I><path d="M3 1Q8 0 10 5Q11 8 16 10Q13 15 2 14Q0 14 1 11Q4 8 3 1Z" fill="#e09028" stroke="#8a4808" strokeWidth=".8" /><ellipse cx="8" cy="12" rx="6.500" ry="3" fill="#7a3c08" /><circle cx="8" cy="12" r="2" fill="#f8d060" /></I>],
  ["过滤", <I><path d="M1 2H15L10 8V15H6V8Z" fill="#aaa" stroke="#666" /><path d="M4 3H12L9 8H7Z" fill="#ea3030" /></I>],
];
const tools2 = [
  ["报价", <I><rect x=".5" y=".5" width="15" height="15" fill="#fff" stroke="#333" /><path d="M1 2.500H15" stroke="#f0d020" strokeWidth="2" /><path d="M2 6.500H7" stroke="#222" /><path d="M9 6.500H14" stroke="#222" /><path d="M2 9.500H7M9 9.500H14" stroke="#20a020" strokeWidth="1.500" /><path d="M2 12.500H7M9 12.500H14" stroke="#e02020" strokeWidth="1.500" /></I>],
  ["走势", <I><rect x="1" y="12" width="3" height="4" fill="#20a040" /><rect x="6" y="10" width="3" height="6" fill="#e03020" /><rect x="11" y="7" width="4" height="9" fill="#f0b020" /><path d="M0 10L6 4L8 7L14 1" fill="none" stroke="#e82020" strokeWidth="2" /><path d="M11 0H16V5Z" fill="#e82020" /></I>],
];
const periods = [
  ["Tick", "red", true], ["日", "gold"], ["周", "gold"], ["月", "gold"], ["季", "gold"], ["X", "gold"],
  ["1", "green"], ["3", "green"], ["5", "green"], ["15", "green"], ["30", "green"], ["60", "green"],
  ["2hr", "green", true], ["4hr", "green", true], ["Y", "green"],
];

const ChartPane = ({ pane }) => {
  const { Plot: Drawing } = pane;
  return (
    <Pane $grow={pane.height}>
      <Axis $selected={pane.selected}>
        {pane.ticks.map(([y, text]) => (
          <AxisTick key={text} style={{ top: `${((y - pane.top) / pane.height) * 100}%` }}>{text}</AxisTick>
        ))}
      </Axis>
      <Plot>
        <PlotSvg viewBox={`${PLOT_LEFT} ${pane.top} ${PLOT_WIDTH} ${pane.height}`} preserveAspectRatio="none" shapeRendering="crispEdges">
          {pane.ticks.map(([y, text, bright]) => (
            <path key={text} d={`M${PLOT_LEFT + 1} ${y + 0.5}H${PLOT_RIGHT}`} stroke={bright ? "#d01818" : C.grid} strokeDasharray="1 1" />
          ))}
          <Drawing />
        </PlotSvg>
        <Legend $gap={pane.gap || 8}>
          {pane.legend.map(([text, color, after = 0]) => (
            <LegendItem key={text} $color={color} $after={after}>{text}</LegendItem>
          ))}
        </Legend>
        {(pane.notes || []).map(([x, y, text]) => (
          <Note key={text} style={{ left: `${((x - PLOT_LEFT) / PLOT_WIDTH) * 100}%`, top: `${((y - pane.top) / pane.height) * 100}%` }}>{text}</Note>
        ))}
      </Plot>
    </Pane>
  );
};

export default function App() {
  return (
    <Shell>
      <Global />
      <MenuBar>
        <Menu>
          {menuItems.map((m) => (
            <MenuItem key={m} $hot={m === "特色功能"}>{m}</MenuItem>
          ))}
        </Menu>
        <AppTitle>博易云-鲁证期货</AppTitle>
        <MenuEnd>
          <PillButton>
            <svg width="12" height="14" viewBox="0 0 12 14"><path d="M8 0L1 8H5L2 14L11 5H7Z" fill="#f59a1c" /></svg>
            交易
          </PillButton>
          <PillButton>
            <svg width="17" height="13" viewBox="0 0 17 13"><ellipse cx="8.500" cy="6" rx="8" ry="5.500" fill="#858585" /><path d="M3 9L2 13L8 11Z" fill="#858585" /><path d="M4 6h2M7.500 6h2M11 6h2" stroke="#eee" strokeWidth="2" /></svg>
            论坛
          </PillButton>
        </MenuEnd>
        <WindowButtons>
          <WindowButton aria-label="最小化"><svg width="10" height="10"><path d="M1 8.500H9" stroke="currentColor" strokeWidth="2" /></svg></WindowButton>
          <WindowButton aria-label="还原"><svg width="12" height="12"><path d="M3.500 3.500V.5H11.500V8.500H8.500M.5 3.500H8.500V11.500H.5Z" fill="none" stroke="currentColor" /></svg></WindowButton>
          <WindowButton aria-label="关闭"><svg width="12" height="12"><path d="M1 1L11 11M11 1L1 11" stroke="currentColor" strokeWidth="2" /></svg></WindowButton>
        </WindowButtons>
        <Watermark>
          <svg width="32" height="29" viewBox="0 0 32 29">
            <rect width="32" height="29" rx="3" fill="#e2561a" />
            <ellipse cx="16" cy="14.500" rx="13" ry="11.500" fill="none" stroke="#fff" strokeWidth="2.500" />
            <path d="M8 9.500H24M16 9.500V22M10 15.500V20.500H22V15.500M10 15.500H13M19 15.500H22" fill="none" stroke="#fff" strokeWidth="2.500" />
          </svg>
          <MarkText>
            <MarkTop><i>5e</i><b>天资</b></MarkTop>
            <MarkSub>5etz.com</MarkSub>
          </MarkText>
        </Watermark>
      </MenuBar>

      <ToolBar>
        <ToolGroup>
          {tools.map(([name, icon]) => (
            <ToolButton key={name} aria-label={name}>{icon}</ToolButton>
          ))}
          <NewBadge>新</NewBadge>
        </ToolGroup>
        <Divider />
        <ToolGroup>
          {tools2.map(([name, icon]) => (
            <ToolButton key={name} aria-label={name}>{icon}</ToolButton>
          ))}
          {periods.map(([text, tone, small]) =>
            text === "日" ? (
              <SelectedBox key={text}><Badge $tone={tone}>{text}</Badge></SelectedBox>
            ) : (
              <Badge key={text} $tone={tone} $small={small}>{text}</Badge>
            )
          )}
        </ToolGroup>
        <Divider />
        <Badge $tone="red">画</Badge>
      </ToolBar>

      <Body>
        <SideTabs>
          {sideTabs.map((t, i) => (
            <SideTab key={t} href="#" $active={i === 0}>{i === 0 ? `${t}▸` : t}</SideTab>
          ))}
        </SideTabs>

        <ChartArea>
          <ChartHeader>
            <ChartTitle>铁矿石2005(023105)&lt;日线&gt;</ChartTitle>
            <ChartLinks>
              <a href="#">商品叠加</a>
              <a href="#">查看期权</a>
              <PeriodLink href="#">周期</PeriodLink>
            </ChartLinks>
            <NavIcons>
              <IconButton aria-label="上一个"><svg width="14" height="12"><path d="M1.500 6L5.500 2V4.500H12.500V7.500H5.500V10Z" fill="none" stroke="currentColor" /></svg></IconButton>
              <IconButton aria-label="下一个"><svg width="14" height="12"><path d="M12.500 6L8.500 2V4.500H1.500V7.500H8.500V10Z" fill="none" stroke="currentColor" /></svg></IconButton>
              <IconButton aria-label="布局"><svg width="14" height="12"><path d="M0 8.500H9M9.500 0V12" stroke="currentColor" /><path d="M12 1V12" stroke="currentColor" strokeWidth="2" strokeDasharray="1 2" /></svg></IconButton>
            </NavIcons>
          </ChartHeader>
          {panes.map((pane) => (
            <ChartPane key={pane.id} pane={pane} />
          ))}
          <DateAxis>
            <PeriodName>日线</PeriodName>
            <DateTrack>
              {dates.map(([x, text]) => (
                <DateMark key={text} style={{ left: `${((x - PLOT_LEFT) / PLOT_WIDTH) * 100}%` }}>{text}</DateMark>
              ))}
            </DateTrack>
          </DateAxis>
        </ChartArea>

        <Quote>
          <QuoteHead>
            <QuoteTitle>铁矿石<span>2005(i2005)</span></QuoteTitle>
            <IconButton aria-label="窗口"><svg width="14" height="12"><path d="M3 2.500H11.500V9.500H2.500V2.500Z" fill="none" stroke="currentColor" /></svg></IconButton>
          </QuoteHead>
          <Ratio>
            <RatioPart $grow={52} $color={C.red} />
            <RatioPart $grow={186} $color="#00e400" />
          </Ratio>
          <DepthRow>
            <DepthLabel>卖出</DepthLabel>
            <Big $w={80} $color={R}>653.5</Big>
            <Big $w={49} $color={Y}>560</Big>
          </DepthRow>
          <DepthRow>
            <DepthLabel>买入</DepthLabel>
            <Big $w={80} $color={R}>653.0</Big>
            <Big $w={49} $color={Y}>158</Big>
          </DepthRow>
          <Stats>
            <colgroup><col width="33" /><col width="80" /><col width="45" /><col width="82" /></colgroup>
            <tbody>
              {stats.map(([a, av, ac, b, bv, bc]) => (
                <tr key={a}>
                  <th scope="row">{a}</th>
                  <Num $color={ac}>{av}</Num>
                  <th scope="row">{b}</th>
                  <Num $color={bc} $pad={6}>{bv}</Num>
                </tr>
              ))}
            </tbody>
          </Stats>
          <Ticks>
            <colgroup><col width="45" /><col width="60" /><col width="48" /><col width="47" /><col width="40" /></colgroup>
            <thead>
              <tr><th>北京</th><th>价格</th><th>√大单</th><th>仓差</th><th>性质</th></tr>
            </thead>
            <tbody>
              {ticks.map(([time, price, vol, delta, kind, dir], i) => {
                const color = dir === "R" ? R : G;
                return (
                  <tr key={i}>
                    <Time $minor={time[0] === ":"}>{time}</Time>
                    <Num $color={R}>{price}</Num>
                    <Num $color={color}>{vol}</Num>
                    <Num $color={Y}>{delta}</Num>
                    <Kind $color={color}>{kind}</Kind>
                  </tr>
                );
              })}
            </tbody>
          </Ticks>
          <QuoteTabs>
            <QuoteTab $active>笔</QuoteTab>
            <QuoteTab>权</QuoteTab>
            <TabRest />
          </QuoteTabs>
        </Quote>
      </Body>

      <StatusBar>
        <IndexQuote>沪<IndexValue $lead>2970.93</IndexValue><IndexValue>+90.63</IndexValue>3972.44亿</IndexQuote>
        <IndexQuote>深<b>11381.76</b><IndexValue>+400.99</IndexValue>6320.86亿</IndexQuote>
        <IndexQuote>300<b>4069.67</b><IndexValue>+129.62</IndexValue>3174.26亿</IndexQuote>
        <StatusEnd>
          <b>Po<em>b</em>o</b>
          <svg width="22" height="14" viewBox="0 0 22 14"><path d="M0 1H10L6 6V14H4V6Z" fill="none" stroke="#404040" strokeWidth="1.500" /><path d="M14 14V8M17 14V4M20 14V0" stroke="#404040" strokeWidth="2" /></svg>
          <span>20:11</span>
        </StatusEnd>
      </StatusBar>
    </Shell>
  );
}
